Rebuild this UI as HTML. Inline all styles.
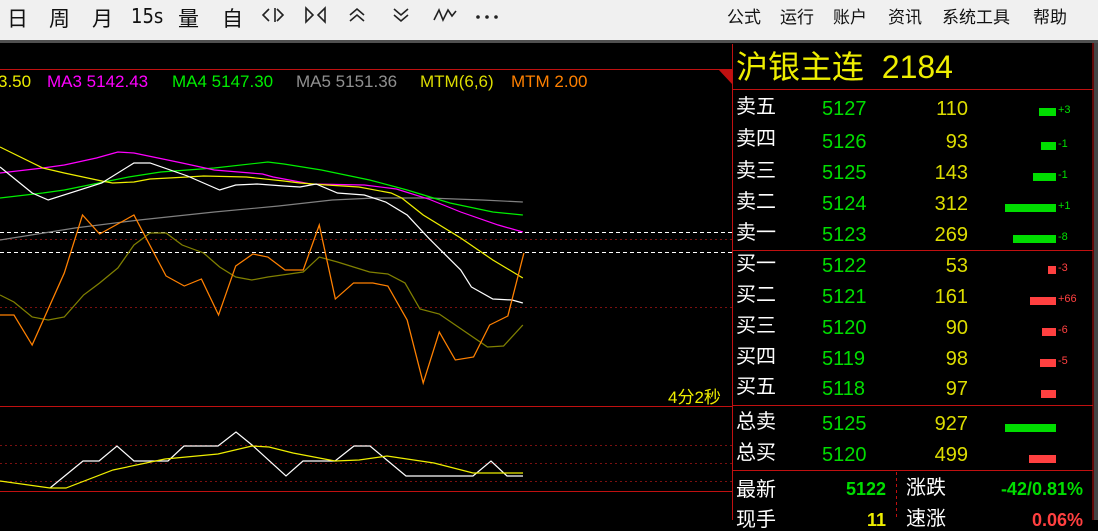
<!DOCTYPE html>
<html><head><meta charset="utf-8"><style>
*{margin:0;padding:0;box-sizing:border-box}
body{width:1098px;height:520px;overflow:hidden;background:#000;position:relative;font-family:"Liberation Sans","Noto Sans CJK SC",sans-serif}
.tb{position:absolute;left:0;top:0;width:1098px;height:40px;background:#f0f0f0}
.gb{position:absolute;left:0;top:40px;width:1098px;height:3px;background:#505050}
.t{position:absolute;white-space:nowrap}
.tbi{font-size:21px;color:#111;top:3px}
.mn{font-size:17px;color:#111;top:3px}
.lg{font-size:17px;top:72px}
.r{position:absolute;white-space:nowrap;font-size:20px;line-height:20px}
.lb{color:#fff;left:736px}
.pr{color:#00dd00;left:822px}
.vo{color:#dddd00;right:130px;text-align:right}
.bar{position:absolute;height:8px}
.ch{position:absolute;font-size:11px;left:1058px}
</style></head><body>
<div class="tb"></div><div class="gb"></div>
<div class="t tbi" style="left:7px">日</div>
<div class="t tbi" style="left:49px">周</div>
<div class="t tbi" style="left:92px">月</div>
<div class="t tbi" style="left:131px;font-family:'DejaVu Sans Condensed','DejaVu Sans';font-size:20px;top:4px">15s</div>
<div class="t tbi" style="left:178px">量</div>
<div class="t tbi" style="left:222px">自</div>
<svg style="position:absolute;left:0;top:0" width="520" height="40" fill="none" stroke="#222" stroke-width="1.6">
<path d="M269 9l-6 6 6 6M275 8v14M277 9l6 6-6 6"/>
<path d="M306 8v14l7-7zM325 8v14l-7-7z"/>
<path d="M350 15l7-6 7 6M350 21l7-6 7 6"/>
<path d="M394 9l7 6 7-6M394 15l7 6 7-6"/>
<path d="M434 20l5-10 4 10 5-10 4 6 4-5"/>
<circle cx="478" cy="17" r="1" fill="#222"/><circle cx="487" cy="17" r="1" fill="#222"/><circle cx="496" cy="17" r="1" fill="#222"/>
</svg>
<div class="t mn" style="left:727px">公式</div>
<div class="t mn" style="left:780px">运行</div>
<div class="t mn" style="left:833px">账户</div>
<div class="t mn" style="left:888px">资讯</div>
<div class="t mn" style="left:942px">系统工具</div>
<div class="t mn" style="left:1033px">帮助</div>

<svg style="position:absolute;left:0;top:0" width="1098" height="520">
<rect x="1094" y="43" width="4" height="477" fill="#444"/>
<line x1="1093" y1="43" x2="1093" y2="520" stroke="#c01010"/>
<line x1="732.5" y1="44" x2="732.5" y2="520" stroke="#c01010"/>
<line x1="0" y1="69.5" x2="732" y2="69.5" stroke="#c01010"/>
<path d="M718 69H732V84Z" fill="#c01010"/>
<line x1="0" y1="406.5" x2="732" y2="406.5" stroke="#c01010"/>
<line x1="0" y1="491.5" x2="732" y2="491.5" stroke="#c01010"/>
<line x1="733" y1="89.5" x2="1093" y2="89.5" stroke="#c01010"/>
<line x1="733" y1="250.5" x2="1093" y2="250.5" stroke="#c01010"/>
<line x1="733" y1="405.5" x2="1093" y2="405.5" stroke="#c01010"/>
<line x1="733" y1="470.5" x2="1093" y2="470.5" stroke="#c01010"/>
<line x1="896.5" y1="472" x2="896.5" y2="520" stroke="#c01010" stroke-dasharray="3,3"/>
<g stroke="#7a1010" stroke-dasharray="2,3">
<line x1="0" y1="239.5" x2="732" y2="239.5"/><line x1="0" y1="307.5" x2="732" y2="307.5"/>
<line x1="0" y1="445.5" x2="732" y2="445.5"/><line x1="0" y1="463.5" x2="732" y2="463.5"/><line x1="0" y1="481.5" x2="732" y2="481.5"/>
</g>
<g stroke="#fff" stroke-dasharray="4,3">
<line x1="0" y1="232.5" x2="732" y2="232.5"/><line x1="0" y1="252.5" x2="732" y2="252.5"/>
</g>
<g fill="none" stroke-width="1.2" transform="scale(1.0714,1)">
<polyline stroke="#808080" points="0,240 70,228 130,220 200,212 260,206 310,200 350,198 400,198 450,200 488,202"/>
<polyline stroke="#00ee00" points="0,198 40,193 60,190 120,177 150,172 200,168 250,162 265,164 300,170 345,180 380,190 420,203 460,212 488,215"/>
<polyline stroke="#ff00ff" points="0,173 40,168 60,165 90,158 110,152 125,153 170,163 200,170 245,174 255,177 290,184 340,185 370,189 400,199 430,212 465,225 488,232"/>
<polyline stroke="#eeee00" points="0,147 40,168 60,173 95,181 105,183 125,182 140,179 175,177 190,176 230,177 265,181 280,183 305,185 335,187 365,193 375,198 395,215 430,238 460,260 488,278"/>
<polyline stroke="#fff" points="0,167 30,193 45,200 95,183 125,163 140,163 175,176 205,190 220,185 240,184 265,186 280,187 295,184 315,193 340,195 360,202 380,215 400,238 430,270 440,287 460,299 478,300 488,303"/>
<polyline stroke="#808000" points="0,295 13,302 30,317 45,320 60,317 78,295 93,283 110,268 125,245 140,233 155,233 170,245 190,253 205,267 220,277 235,280 250,277 270,274 283,272 298,257 315,262 330,267 345,272 362,274 378,283 392,309 410,314 440,336 455,347 470,346 488,325"/>
<polyline stroke="#ff8000" points="0,315 13,315 30,345 60,273 77,215 93,234 125,215 155,276 172,286 188,279 204,315 220,266 236,254 250,257 266,270 283,270 298,225 313,299 330,283 348,283 362,286 380,320 395,383 410,332 425,360 442,357 457,325 474,316 489,253"/>
</g>
<g fill="none" stroke-width="1.2">
<polyline stroke="#fff" points="50,488 83,461 99,461 117,446 134,461 168,461 184,446 218,446 236,432 252,445 286,476 303,461 335,461 354,446 370,446 406,476 473,476 491,461 507,476 523,476"/>
<polyline stroke="#eeee00" points="0,481 50,488 66,488 113,470 165,459 218,454 252,446 269,447 293,453 335,461 359,460 387,456 434,463 473,473 523,473"/>
</g>
</svg>

<div class="t lg" style="left:-2px;color:#eeee00">3.50</div>
<div class="t lg" style="left:47px;color:#ff00ff">MA3 5142.43</div>
<div class="t lg" style="left:172px;color:#00ee00">MA4 5147.30</div>
<div class="t lg" style="left:296px;color:#909090">MA5 5151.36</div>
<div class="t lg" style="left:420px;color:#dddd00">MTM(6,6)</div>
<div class="t lg" style="left:511px;color:#ff8000">MTM 2.00</div>
<div class="t" style="left:668px;top:383px;font-size:17px;color:#eeee00">4分2秒</div>

<div class="t" style="left:736px;top:49px;font-size:32px;color:#eeee00;line-height:36px">沪银主连&nbsp; 2184</div>

<div class="r lb" style="top:97px">卖五</div><div class="r pr" style="top:99px">5127</div><div class="r vo" style="top:99px">110</div>
<div class="r lb" style="top:129px">卖四</div><div class="r pr" style="top:132px">5126</div><div class="r vo" style="top:132px">93</div>
<div class="r lb" style="top:161px">卖三</div><div class="r pr" style="top:163px">5125</div><div class="r vo" style="top:163px">143</div>
<div class="r lb" style="top:192px">卖二</div><div class="r pr" style="top:194px">5124</div><div class="r vo" style="top:194px">312</div>
<div class="r lb" style="top:223px">卖一</div><div class="r pr" style="top:225px">5123</div><div class="r vo" style="top:225px">269</div>
<div class="r lb" style="top:254px">买一</div><div class="r pr" style="top:256px">5122</div><div class="r vo" style="top:256px">53</div>
<div class="r lb" style="top:285px">买二</div><div class="r pr" style="top:287px">5121</div><div class="r vo" style="top:287px">161</div>
<div class="r lb" style="top:316px">买三</div><div class="r pr" style="top:318px">5120</div><div class="r vo" style="top:318px">90</div>
<div class="r lb" style="top:347px">买四</div><div class="r pr" style="top:349px">5119</div><div class="r vo" style="top:349px">98</div>
<div class="r lb" style="top:377px">买五</div><div class="r pr" style="top:379px">5118</div><div class="r vo" style="top:379px">97</div>
<div class="r lb" style="top:412px">总卖</div><div class="r pr" style="top:414px">5125</div><div class="r vo" style="top:414px">927</div>
<div class="r lb" style="top:443px">总买</div><div class="r pr" style="top:445px">5120</div><div class="r vo" style="top:445px">499</div>

<div class="bar" style="left:1039px;width:17px;top:108px;background:#00dd00"></div><div class="ch" style="top:104px;color:#00dd00">+3</div>
<div class="bar" style="left:1041px;width:15px;top:142px;background:#00dd00"></div><div class="ch" style="top:138px;color:#00dd00">-1</div>
<div class="bar" style="left:1033px;width:23px;top:173px;background:#00dd00"></div><div class="ch" style="top:169px;color:#00dd00">-1</div>
<div class="bar" style="left:1005px;width:51px;top:204px;background:#00dd00"></div><div class="ch" style="top:200px;color:#00dd00">+1</div>
<div class="bar" style="left:1013px;width:43px;top:235px;background:#00dd00"></div><div class="ch" style="top:231px;color:#00dd00">-8</div>
<div class="bar" style="left:1048px;width:8px;top:266px;background:#ff4040"></div><div class="ch" style="top:262px;color:#ff4040">-3</div>
<div class="bar" style="left:1030px;width:26px;top:297px;background:#ff4040"></div><div class="ch" style="top:293px;color:#ff4040">+66</div>
<div class="bar" style="left:1042px;width:14px;top:328px;background:#ff4040"></div><div class="ch" style="top:324px;color:#ff4040">-6</div>
<div class="bar" style="left:1040px;width:16px;top:359px;background:#ff4040"></div><div class="ch" style="top:355px;color:#ff4040">-5</div>
<div class="bar" style="left:1041px;width:15px;top:390px;background:#ff4040"></div>
<div class="bar" style="left:1005px;width:51px;top:424px;background:#00dd00"></div>
<div class="bar" style="left:1029px;width:27px;top:455px;background:#ff4040"></div>

<div class="r lb" style="top:480px">最新</div>
<div class="r" style="top:479px;right:212px;color:#00dd00;font-weight:bold;font-size:18px">5122</div>
<div class="r" style="top:478px;left:906px;color:#fff">涨跌</div>
<div class="r" style="top:479px;right:15px;color:#00dd00;font-weight:bold;font-size:18px">-42/0.81%</div>
<div class="r lb" style="top:510px">现手</div>
<div class="r" style="top:510px;right:212px;color:#eeee00;font-weight:bold;font-size:18px">11</div>
<div class="r" style="top:509px;left:906px;color:#fff">速涨</div>
<div class="r" style="top:510px;right:15px;color:#ff4040;font-weight:bold;font-size:18px">0.06%</div>
</body></html>
